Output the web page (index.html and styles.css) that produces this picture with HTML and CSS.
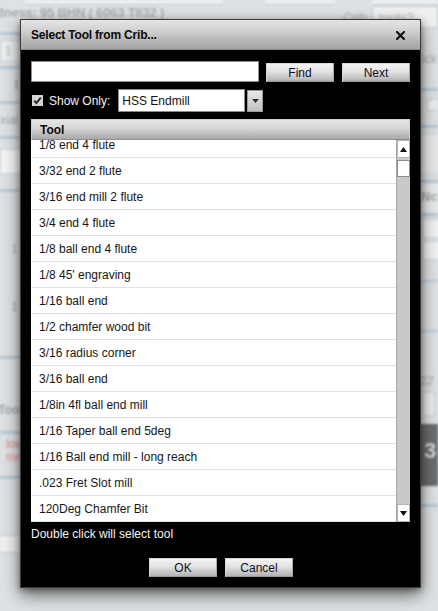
FILE: index.html
```html
<!DOCTYPE html>
<html>
<head>
<meta charset="utf-8">
<link rel="stylesheet" href="styles.css">
</head>
<body>
<div class="page">
  <div class="backdrop">
    <div class="bd-top">
      <div class="bd-fields">
        <span class="bd-field f1"></span>
        <span class="bd-field f2"></span>
        <span class="bd-field f3"></span>
      </div>
      <div class="bd-head">
        <span class="bd-hard">dness: 95 BHN ( 6063 T832 )</span>
        <span class="bd-crib">Crib <span class="bd-cribbox">tools2</span></span>
      </div>
    </div>
    <div class="bd-cols">
      <div class="bd-left">
        <div class="bl line"></div>
        <div class="bl box1">1</div>
        <div class="bl line"></div>
        <div class="bl tx r">I</div>
        <div class="bl line"></div>
        <div class="bl tx">xial</div>
        <div class="bl line"></div>
        <div class="bl wbox"></div>
        <div class="bl line"></div>
        <div class="bl tall r">1</div>
        <div class="bl tall2 r">1</div>
        <div class="bl line"></div>
        <div class="bl tx2">Tool</div>
        <div class="bl line"></div>
        <div class="bl red">low<br>nve</div>
        <div class="bl line"></div>
        <div class="bl btn">rch</div>
      </div>
      <div class="bd-right">
        <div class="br tx">ick</div>
        <div class="br line"></div>
        <div class="br chk"><span></span></div>
        <div class="br line"></div>
        <div class="br gbox"></div>
        <div class="br line"></div>
        <div class="br tx3">Nc</div>
        <div class="br line"></div>
        <div class="br inp"></div>
        <div class="br inp"></div>
        <div class="br line2"></div>
        <div class="br line3"></div>
        <div class="br tx4">22</div>
        <div class="br sbtn"><span></span></div>
        <div class="br dark">3 -</div>
        <div class="br line"></div>
      </div>
    </div>
  </div>

  <div class="dialog">
    <div class="titlebar">
      <span class="title">Select Tool from Crib...</span>
      <svg class="close" width="9" height="9" viewBox="0 0 9 9"><path d="M1 1L8 8M8 1L1 8" stroke="#111" stroke-width="2.2" stroke-linecap="square"/></svg>
    </div>
    <div class="body">
      <div class="search-row">
        <input class="search" type="text">
        <button class="btn find">Find</button>
        <button class="btn next">Next</button>
      </div>
      <div class="filter-row">
        <span class="check">
          <svg width="11" height="11" viewBox="0 0 11 11"><path d="M2.2 5.6L4.4 8L8.8 2.6" fill="none" stroke="#222" stroke-width="1.8"/></svg>
        </span>
        <span class="show-label">Show Only:</span>
        <span class="select">HSS Endmill</span>
        <span class="drop"><svg width="7" height="4" viewBox="0 0 7 4"><path d="M0 0H7L3.5 4Z" fill="#333"/></svg></span>
      </div>
      <div class="grid">
        <div class="grid-head">Tool<span class="grip">...</span></div>
        <div class="grid-body">
          <div class="rows">
            <div class="row">1/8 end 4 flute</div>
            <div class="row">3/32 end 2 flute</div>
            <div class="row">3/16 end mill 2 flute</div>
            <div class="row">3/4 end 4 flute</div>
            <div class="row">1/8 ball end 4 flute</div>
            <div class="row">1/8 45' engraving</div>
            <div class="row">1/16 ball end</div>
            <div class="row">1/2 chamfer wood bit</div>
            <div class="row">3/16 radius corner</div>
            <div class="row">3/16 ball end</div>
            <div class="row">1/8in 4fl ball end mill</div>
            <div class="row">1/16 Taper ball end 5deg</div>
            <div class="row">1/16 Ball end mill - long reach</div>
            <div class="row">.023 Fret Slot mill</div>
            <div class="row">120Deg Chamfer Bit</div>
          </div>
          <div class="scrollbar">
            <div class="sb-btn"><svg width="7" height="5" viewBox="0 0 7 5"><path d="M3.5 0L7 5H0Z" fill="#111"/></svg></div>
            <div class="sb-thumb"></div>
            <div class="sb-track"></div>
            <div class="sb-btn"><svg width="7" height="5" viewBox="0 0 7 5"><path d="M0 0H7L3.5 5Z" fill="#111"/></svg></div>
          </div>
        </div>
      </div>
      <div class="hint">Double click will select tool</div>
      <div class="actions">
        <button class="btn act">OK</button>
        <button class="btn act">Cancel</button>
      </div>
    </div>
  </div>
</div>
</body>
</html>
```

FILE: styles.css
```css
* { box-sizing: border-box; }
html, body { margin: 0; padding: 0; }
body {
  width: 438px;
  height: 611px;
  overflow: hidden;
  background: #dcdfe1;
  font-family: "Liberation Sans", Arial, sans-serif;
  font-size: 12px;
}
.page {
  position: relative;
  width: 438px;
  height: 611px;
  overflow: hidden;
}

/* ---------- blurred page behind the modal ---------- */
.backdrop {
  width: 438px;
  height: 611px;
  background: #dfe2e4;
  filter: blur(1.1px);
  color: #a3a6a8;
}
.bd-top { height: 32px; }
.bd-fields { display: flex; height: 5px; }
.bd-field { display: block; height: 5px; background: #eef0f1; border-bottom: 1px solid #c8cbcd; }
.f1 { margin-left: 25px; width: 197px; }
.f2 { margin-left: 44px; width: 69px; }
.f3 { margin-left: 37px; width: 66px; }
.bd-head {
  display: flex;
  justify-content: space-between;
  align-items: flex-start;
  height: 27px;
}
.bd-hard {
  margin-top: 0;
  font-size: 13px;
  font-weight: bold;
  color: #aaadaf;
  margin-left: -4px;
  letter-spacing: -0.2px;
}
.bd-crib { display: flex; align-items: flex-start; gap: 5px; font-size: 13px; margin-top: 5px; color: #aaadaf; }
.bd-cribbox {
  display: block;
  width: 66px;
  height: 22px;
  margin-top: -4px;
  padding: 3px 6px;
  background: #f0f1f2;
  border: 1px solid #c6c9cb;
  color: #b5b8ba;
  font-size: 13px;
}
.bd-cols { display: flex; justify-content: space-between; }
.bd-left, .bd-right { display: flex; flex-direction: column; width: 30px; }
.bd-right { width: 20px; }
.bl.line, .br.line { height: 3px; background: #b5cadb; }
.bl { width: 30px; }
.box1 { height: 22px; margin: 5px 0 4px; background: #eceeef; border: 1px solid #cdd0d2; padding: 3px 4px; color: #b8bbbd; }
.tx { height: 32px; padding-top: 9px; font-size: 12px; }
.r { text-align: right; padding-right: 12px; }
.bl.tx.r { font-weight: bold; }
.wbox { height: 25px; margin: 10px 0 15px; background: #f4f5f6; border: 1px solid #d0d3d5; }
.tall { padding-top: 50px; font-size: 12px; height: 62px; }
.tall2 { height: 102px; padding-top: 46px; font-size: 12px; }
.tx2 { height: 72px; padding-top: 44px; font-size: 12px; font-weight: bold; margin-left: -2px; }
.red { height: 42px; padding-top: 4px; color: #e48a86; font-size: 12px; padding-left: 6px; line-height: 13px; }
.bl.btn { height: 18px; margin-top: 56px; background: #eef0f1; border: 1px solid #c6c9cb; color: #a8abad; padding: 1px 2px; text-align: right; border-left: none; font-size: 12px; }
.br { width: 20px; }
.br.tx { height: 56px; padding-top: 20px; font-size: 12px; white-space: nowrap; padding-left: 4px; }
.br.chk { height: 34px; padding: 8px 0 0 9px; }
.br.chk span { display: block; width: 12px; height: 12px; background: #eceeef; border: 1px solid #c8cbcd; }
.gbox { height: 40px; margin: 6px 0; background: #e8eaeb; border: 1px solid #d3d6d8; border-right: none; }
.tx3 { height: 30px; padding: 6px 0 0 3px; font-size: 13px; background: #e9ebec; font-weight: bold; }
.inp { height: 19px; margin-top: 3px; background: #f1f2f3; border: 1px solid #cfd2d4; border-right: none; margin-left: 4px; }
.line2 { height: 2px; background: #b8ccdc; margin-top: 20px; }
.line3 { height: 2px; background: #b8ccdc; margin-top: 48px; }
.tx4 { height: 58px; padding-top: 42px; font-style: italic; font-size: 12px; padding-left: 2px; }
.sbtn { height: 30px; padding: 2px 0 0 4px; }
.sbtn span { display: block; width: 13px; height: 24px; background: #eceeef; border: 1px solid #c6c9cb; }
.dark { height: 62px; background: #6b6d6f; color: #d4d6d8; font-size: 22px; font-weight: bold; padding: 14px 0 0 6px; white-space: nowrap; margin-top: 4px; margin-bottom: 18px; }

/* ---------- modal dialog ---------- */
.dialog {
  position: absolute;
  left: 20px;
  top: 19px;
  width: 401px;
  height: 569px;
  background: #000;
  border: 1px solid #3a3a3a;
  box-shadow: 0 7px 16px rgba(0, 0, 0, 0.55), 0 2px 6px rgba(0, 0, 0, 0.35);
  display: flex;
  flex-direction: column;
}
.titlebar {
  height: 30px;
  flex: none;
  display: flex;
  align-items: center;
  justify-content: space-between;
  padding: 0 10px 0 10px;
  background: linear-gradient(#e4e4e4 0%, #d2d2d2 35%, #b4b4b4 75%, #a4a4a4 100%);
  border-bottom: 1px solid #8a8a8a;
}
.title {
  font-weight: bold;
  font-size: 12px;
  color: #0a0a0a;
  letter-spacing: -0.2px;
}
.close { margin-right: 5px; margin-top: 1px; }

.body {
  flex: 1;
  display: flex;
  flex-direction: column;
  padding: 11px 10px 0 10px;
}
.search-row {
  display: flex;
  align-items: flex-end;
  height: 21px;
}
.search {
  width: 228px;
  height: 21px;
  margin: 0;
  border: 1px solid #8c8c8c;
  background: #fff;
  padding: 0;
  font: inherit;
}
.btn {
  font-family: "Liberation Sans", Arial, sans-serif;
  font-size: 12px;
  color: #101025;
  height: 19px;
  width: 68px;
  padding: 0;
  margin: 0;
  border: 1px solid #d6d6d6;
  border-bottom-color: #9a9a9a;
  border-right-color: #a8a8a8;
  background: linear-gradient(#f4f4f4 0%, #e2e2e2 45%, #c4c4c4 80%, #b2b2b2 100%);
  border-radius: 0;
}
.find { margin-left: 7px; }
.next { margin-left: 8px; }

.filter-row {
  display: flex;
  align-items: center;
  height: 23px;
  margin-top: 7px;
}
.check {
  width: 11px;
  height: 11px;
  margin-left: 1px;
  background: #d4d4d4;
  display: flex;
}
.show-label {
  color: #f2f2f2;
  margin-left: 6px;
  font-size: 12px;
}
.select {
  margin-left: 8px;
  width: 127px;
  height: 23px;
  background: #fff;
  border: 1px solid #8a8a8a;
  color: #111;
  font-size: 12px;
  padding: 4px 0 0 3px;
}
.drop {
  width: 16px;
  height: 22px;
  margin-left: 2px;
  background: linear-gradient(#e8e8e8, #c0c0c0);
  border: 1px solid #9a9a9a;
  display: flex;
  align-items: center;
  justify-content: center;
}

.grid { margin-top: 7px; display: flex; flex-direction: column; }
.grid-head {
  height: 21px;
  padding: 3px 0 0 8px;
  font-weight: bold;
  color: #0a0a0a;
  background: linear-gradient(#e6e6e6 0%, #d6d6d6 45%, #b8b8b8 80%, #aaaaaa 100%);
  border: 1px solid #cfcfcf;
  border-bottom-color: #8e8e8e;
  display: flex;
  justify-content: space-between;
}
.grip { color: #9a9a9a; font-size: 8px; padding: 7px 6px 0 0; font-weight: normal; }
.grid-body {
  height: 382px;
  background: #fff;
  display: flex;
  overflow: hidden;
}
.rows { flex: 1; margin-top: -8px; }
.row {
  height: 26px;
  line-height: 26px;
  padding-left: 8px;
  border-bottom: 1px solid #e2e2e2;
  color: #161616;
  font-size: 12px;
  white-space: nowrap;
}
.scrollbar {
  width: 14px;
  display: flex;
  flex-direction: column;
  background: #c9c9c9;
  border-left: 1px solid #a8a8a8;
}
.sb-btn {
  height: 18px;
  background: #fff;
  border: 1px solid #b4b4b4;
  display: flex;
  align-items: center;
  justify-content: center;
}
.sb-thumb {
  height: 17px;
  margin-top: 2px;
  background: #fff;
  border: 1px solid #8c8c8c;
}
.sb-track { flex: 1; }

.hint {
  color: #f4f4f4;
  font-size: 12px;
  margin-top: 5px;
  line-height: 14px;
}
.actions {
  display: flex;
  justify-content: center;
  gap: 8px;
  margin-top: 17px;
  padding-left: 1px;
}
```
